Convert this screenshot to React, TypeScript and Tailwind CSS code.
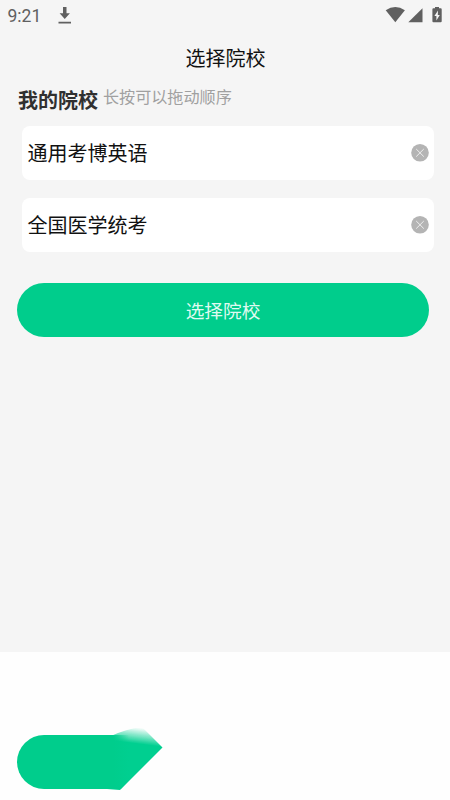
import React from 'react';

function StatusBar() {
  return (
    <header className="flex h-[32px] items-center text-[#606060]">
      <span className="ml-[7.5px] w-[50.5px] font-['Roboto',sans-serif] text-[17.5px] leading-[32px]">9:21</span>
      <svg width="14" height="18" viewBox="0 0 14 18" fill="currentColor">
        <path d="M5 0h3.5v6.3h3.4L6.75 12 1.6 6.3H5zM0.5 14.8h12.5v1.6H0.5z" />
      </svg>
      <svg className="ml-auto mr-[2px]" width="63" height="18" viewBox="0 0 63 18" fill="currentColor">
        <path d="M0.7 3.3Q10.3 -3.3 19.9 3.3L10.3 15.3z" />
        <path d="M37.5 1.3v14H23.3z" />
        <path d="M50 -0.3h4v1.6h1.7q1 0 1 1v12q0 1-1 1h-7.3q-1 0-1-1v-12q0-1 1-1H50z" />
        <path d="M53 3.5L49.4 9h2v4.4L54.8 8h-2z" fill="#f5f5f5" />
      </svg>
    </header>
  );
}

function SchoolCard({ name }: { name: string }) {
  return (
    <li className="flex h-[54px] items-center justify-between rounded-[8px] bg-white pl-[5.5px] pr-[5px]">
      <span className="text-[20px] leading-[54px] text-[#111]">{name}</span>
      <svg width="18" height="18" viewBox="0 0 18 18">
        <circle cx="9" cy="8.8" r="8.8" fill="#b4b4b4" />
        <path d="M5.2 5l7.6 7.6M12.8 5l-7.6 7.6" stroke="#eeeeee" strokeWidth="1" />
      </svg>
    </li>
  );
}

export default function App() {
  return (
    <div className="flex h-[800px] w-[450px] flex-col overflow-hidden bg-[#fefefe] font-['Noto_Sans_CJK_SC',sans-serif]">
      <main className="h-[652px] bg-[#f5f5f5]">
        <StatusBar />
        <h1 className="h-[52px] pl-px text-center text-[20px] leading-[52px] text-[#111]">选择院校</h1>
        <div className="flex h-[32px] gap-[5px] pl-[18px]">
          <h2 className="text-[20px] font-bold leading-[31px] text-[#303030]">我的院校</h2>
          <p className="text-[16.1px] leading-[25px] text-[#a0a0a0]">长按可以拖动顺序</p>
        </div>
        <ul className="ml-[22px] mt-[10px] flex w-[412px] flex-col gap-[18px]">
          <SchoolCard name="通用考博英语" />
          <SchoolCard name="全国医学统考" />
        </ul>
        <button className="ml-[17px] mt-[31.4px] block h-[54px] w-[412px] rounded-full bg-[#00cd8c] pb-px text-[18.7px] leading-[53px] text-[#dffaf0]">
          选择院校
        </button>
      </main>
      <footer className="pl-[17px] pt-[73px]">
        <svg width="150" height="70" viewBox="0 0 150 70">
          <defs>
            <linearGradient id="tipFade" gradientUnits="userSpaceOnUse" x1="117" y1="2" x2="115" y2="18">
              <stop offset="0" stopColor="#04cf90" stopOpacity="0" />
              <stop offset="0.4" stopColor="#04cf90" stopOpacity="0.4" />
              <stop offset="1" stopColor="#04cf90" />
            </linearGradient>
            <linearGradient id="bodyFade" gradientUnits="userSpaceOnUse" x1="96" y1="0" x2="112" y2="0">
              <stop offset="0" stopColor="#00cd8c" />
              <stop offset="1" stopColor="#00cd8c" stopOpacity="0" />
            </linearGradient>
            <filter id="edge" x="-10%" y="-10%" width="120%" height="120%">
              <feGaussianBlur stdDeviation="0.7" />
            </filter>
          </defs>
          <path d="M94 11Q109 4 125 2L145.5 22.5L103 65L90 64V11z" fill="url(#tipFade)" filter="url(#edge)" />
          <path d="M27 10H112V56L104 64H27A27 27 0 0 1 27 10z" fill="url(#bodyFade)" />
        </svg>
      </footer>
    </div>
  );
}
